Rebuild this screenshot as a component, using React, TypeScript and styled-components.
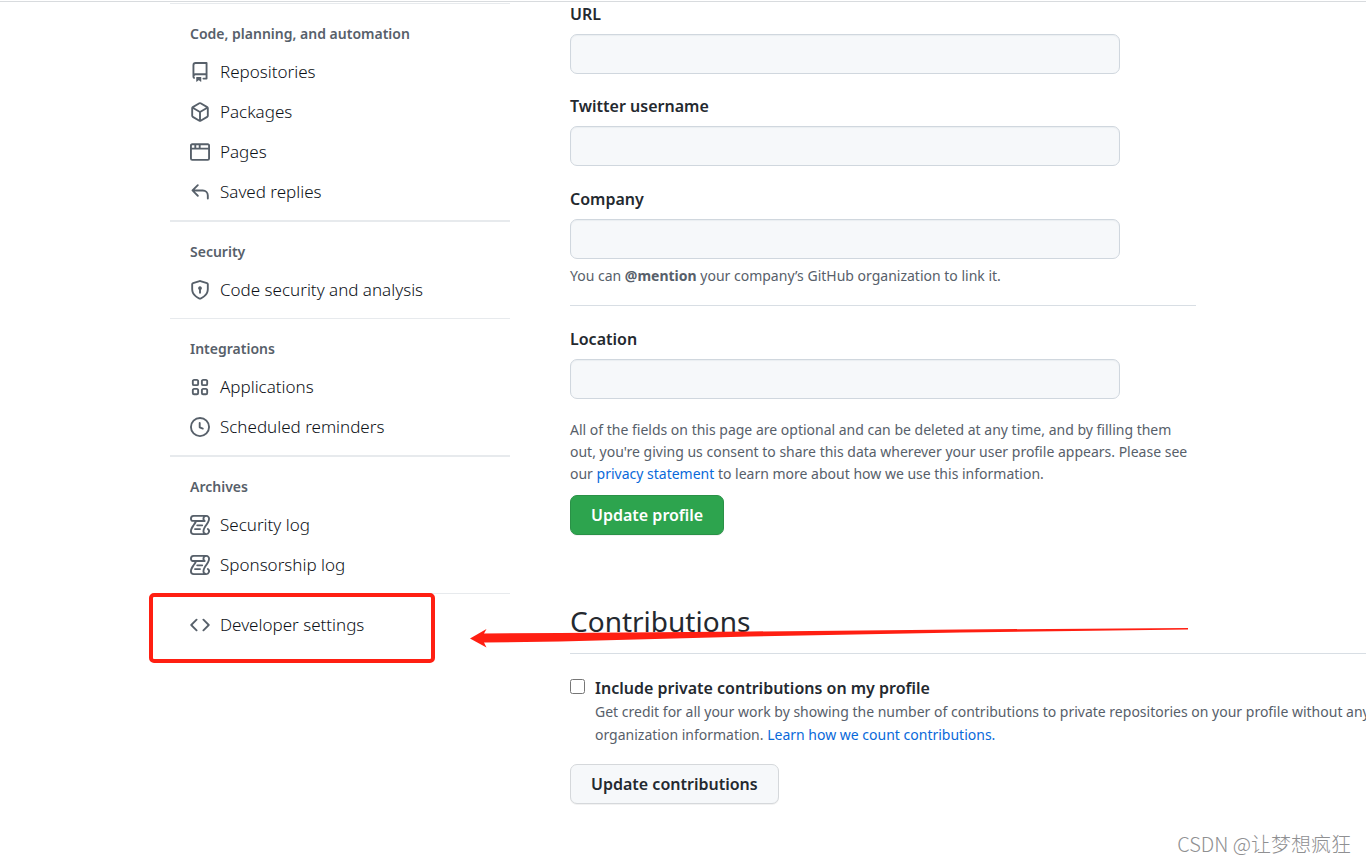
import React from 'react';
import styled, { createGlobalStyle } from 'styled-components';

const GlobalStyle = createGlobalStyle`
  *, *::before, *::after { box-sizing: border-box; }
  body {
    margin: 0;
    background: #ffffff;
    color: #24292f;
    font-family: 'Noto Sans', 'Noto Sans CJK SC', sans-serif;
    font-size: 16px;
    line-height: 24px;
    overflow-x: hidden;
  }
`;

const Page = styled.div`
  position: relative;
  display: flex;
  align-items: flex-start;
  gap: 60px;
  min-height: calc(100vh - 1px);
  margin-top: 1px;
  padding-left: 170px;
  border-top: 1px solid #d8dbde;
  overflow: hidden;
`;

const Sidebar = styled.nav`
  flex: 0 0 340px;
  padding-top: 1px;
`;

const NavGroup = styled.section<{ $heavy?: boolean }>`
  border-top: ${(p) => (p.$heavy ? 2 : 1)}px solid #e7eaed;
  padding-bottom: 8px;
`;

const GroupTitle = styled.h3`
  margin: 0;
  padding: 18px 20px 6px;
  color: #57606a;
  font-size: 14px;
  font-weight: 600;
  line-height: 24px;
`;

const NavList = styled.ul`
  margin: 0;
  padding: 0;
  list-style: none;
`;

const NavLink = styled.a`
  display: flex;
  align-items: center;
  gap: 10px;
  height: 40px;
  padding: 0 20px;
  color: #0d1117;
  font-size: 17px;
  font-weight: 300;
  text-decoration: none;
`;

const Icon = styled.svg`
  flex: none;
  width: 20px;
  height: 20px;
  fill: #57606a;
`;

const DeveloperArea = styled.div`
  position: relative;
  border-top: 1px solid #e7eaed;
  padding-top: 11px;
`;

const Highlight = styled.div`
  position: absolute;
  top: -1px;
  left: -21px;
  width: 286px;
  height: 70px;
  border: 4px solid #ff1f12;
  border-radius: 5px;
  pointer-events: none;
`;

const Arrow = styled.svg`
  position: absolute;
  top: 32px;
  left: 300px;
  width: 720px;
  height: 24px;
  z-index: 1;
  fill: #ff1f12;
  pointer-events: none;
`;

const Main = styled.main`
  flex: 1 0 900px;
`;

const ProfileForm = styled.form`
  display: flex;
  flex-direction: column;
  align-items: flex-start;
  width: 626px;
`;

const Field = styled.div`
  display: flex;
  flex-direction: column;
  gap: 8px;
  width: 100%;
  margin-bottom: 20px;
`;

const CompanyField = styled(Field)`
  margin: 1px 0 0;
`;

const FieldLabel = styled.label`
  font-weight: 600;
  line-height: 24px;
`;

const TextInput = styled.input`
  width: 100%;
  max-width: 550px;
  height: 40px;
  padding: 6px 14px;
  border: 1px solid #d0d7de;
  border-radius: 7px;
  background: #f6f8fa;
  box-shadow: inset 0 1px 1px rgba(208, 215, 222, 0.3);
  font: inherit;
`;

const Note = styled.p`
  margin: 0;
  color: #57606a;
  font-size: 14px;
  line-height: 22px;
`;

const CompanyNote = styled(Note)`
  margin: 6px 0 18px;
`;

const FormNote = styled(Note)`
  margin-bottom: 10px;
`;

const Divider = styled.hr`
  width: 100%;
  margin: 0 0 21px;
  border: 0;
  border-top: 1px solid #d8dee4;
`;

const TextLink = styled.a`
  color: #0969da;
  text-decoration: none;
`;

const Button = styled.button<{ $primary?: boolean }>`
  height: 40px;
  padding: 0 20px;
  border: 1px solid ${(p) => (p.$primary ? '#2a9147' : '#d5d8db')};
  border-radius: 7px;
  background: ${(p) => (p.$primary ? '#2da44e' : '#f6f8fa')};
  box-shadow: 0 1px 0 rgba(27, 31, 36, 0.06);
  color: ${(p) => (p.$primary ? '#ffffff' : '#24292f')};
  font: inherit;
  font-weight: 600;
`;

const Contributions = styled.section`
  padding-top: 66px;
`;

const SectionTitle = styled.h2`
  margin: 0 0 22px;
  padding-bottom: 12px;
  border-bottom: 1px solid #d8dee4;
  font-size: 28px;
  font-weight: 400;
  line-height: 40px;
`;

const CheckRow = styled.div`
  display: grid;
  grid-template-columns: 15px 1fr;
  column-gap: 10px;
  margin-bottom: 18px;
`;

const Checkbox = styled.input`
  width: 15px;
  height: 15px;
  margin: 3px 0 0;
`;

const CheckNote = styled(Note)`
  grid-column: 2;
  line-height: 23px;
`;

const Watermark = styled.div`
  position: absolute;
  right: 15px;
  bottom: 7px;
  color: #8f9092;
  font-family: 'Noto Sans CJK SC', sans-serif;
  font-size: 20px;
  font-weight: 300;
  line-height: 24px;
`;

type NavItem = { label: string; paths: string[] };

const LOG = [
  'M5 8.25a.75.75 0 0 1 .75-.75h4a.75.75 0 0 1 0 1.5h-4A.75.75 0 0 1 5 8.25ZM4 10.5A.75.75 0 0 0 4 12h4a.75.75 0 0 0 0-1.5H4Z',
  'M13-.005c1.654 0 3 1.328 3 3 0 .982-.338 1.933-.783 2.818-.443.879-1.028 1.758-1.582 2.588l-.011.017c-.568.853-1.104 1.659-1.501 2.446-.398.789-.623 1.494-.623 2.136a1.5 1.5 0 1 0 2.333-1.248.75.75 0 0 1 .834-1.246A3 3 0 0 1 13 16H3a3 3 0 0 1-3-3c0-1.582.891-3.135 1.777-4.506.209-.322.418-.637.623-.946.473-.709.923-1.386 1.287-2.048H2.51c-.576 0-1.381-.133-1.907-.783A2.68 2.68 0 0 1 0 2.995a3 3 0 0 1 3-3Zm0 1.5a1.5 1.5 0 0 0-1.5 1.5c0 .476.223.834.667 1.132A.75.75 0 0 1 11.75 5.5H5.368c-.467 1.003-1.141 2.015-1.773 2.963-.192.289-.381.571-.558.845C2.13 10.711 1.5 11.916 1.5 13A1.5 1.5 0 0 0 3 14.5h7.401A2.989 2.989 0 0 1 10 13c0-.979.338-1.928.784-2.812.441-.874 1.023-1.748 1.575-2.576l.017-.026c.568-.853 1.103-1.658 1.501-2.448.398-.79.623-1.497.623-2.143 0-.838-.669-1.5-1.5-1.5Zm-10 0a1.5 1.5 0 0 0-1.5 1.5c0 .321.1.569.27.778.097.12.325.227.74.227h7.674A2.737 2.737 0 0 1 10 2.995c0-.546.146-1.059.401-1.5Z',
];

const CODE = [
  'M4.72 3.22a.75.75 0 011.06 1.06L2.06 8l3.72 3.72a.75.75 0 11-1.06 1.06L.47 8.53a.75.75 0 010-1.06l4.25-4.25zm6.56 0a.75.75 0 10-1.06 1.06L13.94 8l-3.72 3.72a.75.75 0 101.06 1.06l4.25-4.25a.75.75 0 000-1.06l-4.25-4.25z',
];

const tile = (x: number, y: number) =>
  `M${x} ${y + 1.75}c0-.966.784-1.75 1.75-1.75h2.25c.966 0 1.75.784 1.75 1.75v2.25a1.75 1.75 0 01-1.75 1.75h-2.25A1.75 1.75 0 01${x} ${y + 4}v-2.25zm1.75-.25a.25.25 0 00-.25.25v2.25c0 .138.112.25.25.25h2.25a.25.25 0 00.25-.25v-2.25a.25.25 0 00-.25-.25h-2.25z`;

const GROUPS: { title: string; heavy?: boolean; items: NavItem[] }[] = [
  {
    title: 'Code, planning, and automation',
    items: [
      {
        label: 'Repositories',
        paths: [
          'M2 2.5A2.5 2.5 0 014.5 0h8.75a.75.75 0 01.75.75v12.5a.75.75 0 01-.75.75h-2.5a.75.75 0 110-1.5h1.75v-2h-8a1 1 0 00-.714 1.7.75.75 0 01-1.072 1.05A2.495 2.495 0 012 11.5v-9zm10.5-1V9h-8c-.356 0-.694.074-1 .208V2.5a1 1 0 011-1h8zM5 12.25v3.25a.25.25 0 00.4.2l1.45-1.087a.25.25 0 01.3 0L8.6 15.7a.25.25 0 00.4-.2v-3.25a.25.25 0 00-.25-.25h-3.5a.25.25 0 00-.25.25z',
        ],
      },
      {
        label: 'Packages',
        paths: [
          'M8.878.392a1.75 1.75 0 00-1.756 0l-5.25 3.045A1.75 1.75 0 001 4.951v6.098c0 .624.332 1.2.872 1.514l5.25 3.045a1.75 1.75 0 001.756 0l5.25-3.045c.54-.313.872-.89.872-1.514V4.951c0-.624-.332-1.2-.872-1.514L8.878.392zM7.875 1.69a.25.25 0 01.25 0l4.63 2.685L8 7.133 3.245 4.375l4.63-2.685zM2.5 5.677v5.372c0 .09.047.171.125.216l4.625 2.683V8.432L2.5 5.677zm6.25 8.271l4.625-2.683a.25.25 0 00.125-.216V5.677L8.75 8.432v5.516z',
        ],
      },
      {
        label: 'Pages',
        paths: [
          'M0 2.75C0 1.784.784 1 1.75 1h12.5c.966 0 1.75.784 1.75 1.75v10.5A1.75 1.75 0 0114.25 15H1.75A1.75 1.75 0 010 13.25V2.75zm1.75-.25a.25.25 0 00-.25.25V4.5h2v-2H1.75zM5 2.5v2h2v-2H5zm3.5 0v2h6V2.75a.25.25 0 00-.25-.25H8.5zm6 3.5h-13v7.25c0 .138.112.25.25.25h12.5a.25.25 0 00.25-.25V6z',
        ],
      },
      {
        label: 'Saved replies',
        paths: [
          'M6.78 1.97a.75.75 0 010 1.06L3.81 6h6.44A4.75 4.75 0 0115 10.75v2.5a.75.75 0 01-1.5 0v-2.5a3.25 3.25 0 00-3.25-3.25H3.81l2.97 2.97a.75.75 0 11-1.06 1.06L1.47 7.28a.75.75 0 010-1.06l4.25-4.25a.75.75 0 011.06 0z',
        ],
      },
    ],
  },
  {
    title: 'Security',
    heavy: true,
    items: [
      {
        label: 'Code security and analysis',
        paths: [
          'M7.467.133a1.75 1.75 0 011.066 0l5.25 1.68A1.75 1.75 0 0115 3.48V7c0 1.566-.32 3.182-1.303 4.682-.983 1.498-2.585 2.813-5.032 3.855a1.7 1.7 0 01-1.33 0c-2.447-1.042-4.049-2.357-5.032-3.855C1.32 10.182 1 8.566 1 7V3.48a1.75 1.75 0 011.217-1.667l5.25-1.68zm.61 1.429a.25.25 0 00-.153 0l-5.25 1.68a.25.25 0 00-.174.238V7c0 1.358.275 2.666 1.057 3.86.784 1.194 2.121 2.34 4.366 3.297a.2.2 0 00.154 0c2.245-.956 3.582-2.104 4.366-3.298C13.225 9.666 13.5 8.36 13.5 7V3.48a.25.25 0 00-.174-.237l-5.25-1.68zM9.5 6.5a1.5 1.5 0 01-.75 1.3v2.45a.75.75 0 01-1.5 0V7.8A1.5 1.5 0 119.5 6.5z',
        ],
      },
    ],
  },
  {
    title: 'Integrations',
    items: [
      {
        label: 'Applications',
        paths: [tile(1.5, 1.5), tile(8.75, 1.5), tile(1.5, 8.75), tile(8.75, 8.75)],
      },
      {
        label: 'Scheduled reminders',
        paths: [
          'M1.5 8a6.5 6.5 0 1113 0 6.5 6.5 0 01-13 0zM8 0a8 8 0 100 16A8 8 0 008 0zm.5 4.75a.75.75 0 00-1.5 0v3.5a.75.75 0 00.471.696l2.5 1a.75.75 0 00.557-1.392L8.5 7.742V4.75z',
        ],
      },
    ],
  },
  {
    title: 'Archives',
    heavy: true,
    items: [
      { label: 'Security log', paths: LOG },
      { label: 'Sponsorship log', paths: LOG },
    ],
  },
];

function NavEntry({ label, paths }: NavItem) {
  return (
    <NavLink href="#">
      <Icon viewBox="0 0 16 16" aria-hidden="true">
        {paths.map((d) => (
          <path key={d} d={d} fillRule="evenodd" />
        ))}
      </Icon>
      {label}
    </NavLink>
  );
}

export default function App() {
  return (
    <>
      <GlobalStyle />
      <Page>
        <Sidebar aria-label="Settings">
          {GROUPS.map((group) => (
            <NavGroup key={group.title} $heavy={group.heavy}>
              <GroupTitle>{group.title}</GroupTitle>
              <NavList>
                {group.items.map((item) => (
                  <li key={item.label}>
                    <NavEntry {...item} />
                  </li>
                ))}
              </NavList>
            </NavGroup>
          ))}
          <DeveloperArea>
            <NavEntry label="Developer settings" paths={CODE} />
            <Highlight />
            <Arrow viewBox="0 0 720 24" aria-hidden="true">
              <path d="M0 12.5L16.5 3L14 7.5L90 7L280 5.5L490 3.5L718 2V3.5L490 6.5L280 10.5L90 15.5L14 16.5L16.5 21.5Z" />
            </Arrow>
          </DeveloperArea>
        </Sidebar>

        <Main>
          <ProfileForm>
            <Field>
              <FieldLabel htmlFor="url">URL</FieldLabel>
              <TextInput id="url" type="url" />
            </Field>
            <Field>
              <FieldLabel htmlFor="twitter">Twitter username</FieldLabel>
              <TextInput id="twitter" type="text" />
            </Field>
            <CompanyField>
              <FieldLabel htmlFor="company">Company</FieldLabel>
              <TextInput id="company" type="text" />
            </CompanyField>
            <CompanyNote>
              You can <b>@mention</b> your company’s GitHub organization to link it.
            </CompanyNote>
            <Divider />
            <Field>
              <FieldLabel htmlFor="location">Location</FieldLabel>
              <TextInput id="location" type="text" />
            </Field>
            <FormNote>
              All of the fields on this page are optional and can be deleted at any time, and by filling them
              out, you're giving us consent to share this data wherever your user profile appears. Please see
              our <TextLink href="#">privacy statement</TextLink> to learn more about how we use this
              information.
            </FormNote>
            <Button type="button" $primary>
              Update profile
            </Button>
          </ProfileForm>

          <Contributions>
            <SectionTitle>Contributions</SectionTitle>
            <CheckRow>
              <Checkbox id="private" type="checkbox" />
              <FieldLabel htmlFor="private">Include private contributions on my profile</FieldLabel>
              <CheckNote>
                Get credit for all your work by showing the number of contributions to private repositories on
                your profile without any repository or
                <br />
                organization information. <TextLink href="#">Learn how we count contributions.</TextLink>
              </CheckNote>
            </CheckRow>
            <Button type="button">Update contributions</Button>
          </Contributions>
        </Main>
        <Watermark>CSDN @让梦想疯狂</Watermark>
      </Page>
    </>
  );
}
